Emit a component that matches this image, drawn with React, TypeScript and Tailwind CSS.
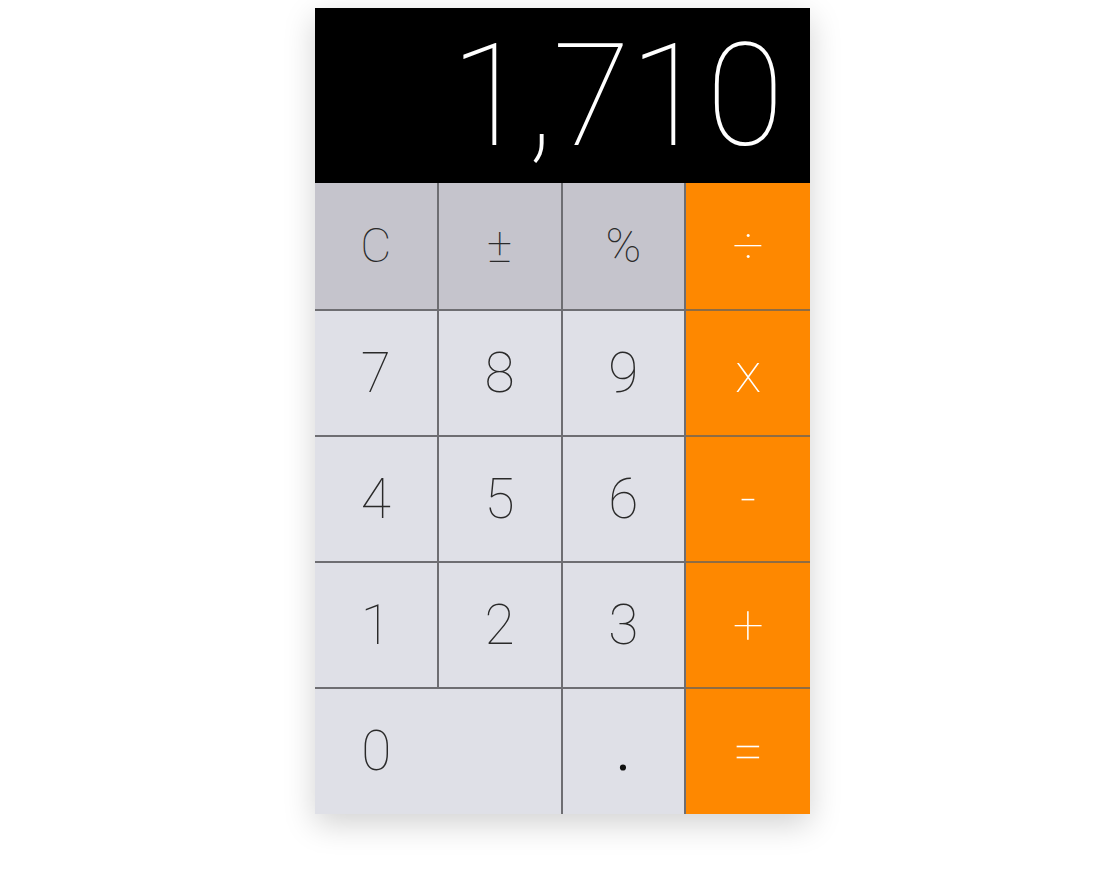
import React from "react";

type Key = { label: string; kind: "fn" | "num" | "op"; wide?: boolean };

const rows: Key[][] = [
  [
    { label: "C", kind: "fn" },
    { label: "±", kind: "fn" },
    { label: "%", kind: "fn" },
    { label: "÷", kind: "op" },
  ],
  [
    { label: "7", kind: "num" },
    { label: "8", kind: "num" },
    { label: "9", kind: "num" },
    { label: "x", kind: "op" },
  ],
  [
    { label: "4", kind: "num" },
    { label: "5", kind: "num" },
    { label: "6", kind: "num" },
    { label: "-", kind: "op" },
  ],
  [
    { label: "1", kind: "num" },
    { label: "2", kind: "num" },
    { label: "3", kind: "num" },
    { label: "+", kind: "op" },
  ],
  [
    { label: "0", kind: "num", wide: true },
    { label: ".", kind: "num" },
    { label: "=", kind: "op" },
  ],
];

const rowHeights = ["h-[128px]", "h-[126px]", "h-[126px]", "h-[126px]", "h-[125px]"];

export default function App() {
  return (
    <div className="min-h-[869px] bg-white pt-2 pl-[315px]" style={{ fontFamily: "Roboto, 'Liberation Sans', sans-serif" }}>
      <div className="w-[495px] shadow-[0_10px_30px_rgba(0,0,0,0.18)]">
        <div className="h-[175px] bg-black flex items-center justify-end pr-[27px] overflow-hidden">
          <span className="text-white text-[142px] leading-none font-thin tracking-[-1px] mt-[2px]">1,710</span>
        </div>
        {rows.map((row, ri) => {
          const last = ri === rows.length - 1;
          return (
            <div key={ri} className={`grid grid-cols-4 ${rowHeights[ri]}`}>
              {row.map((k, ci) => {
                const isLastCol = k.kind === "op";
                const bg =
                  k.kind === "op" ? "bg-[#fe8800] text-white" : k.kind === "fn" ? "bg-[#c5c4cc] text-[#2a2a2a]" : "bg-[#dfe0e7] text-[#2a2a2a]";
                const bb = last ? "" : k.kind === "op" ? "border-b-2 border-b-[#8e6c44]" : "border-b-2 border-b-[#6e6e72]";
                const br = isLastCol ? "" : "border-r-2 border-r-[#6e6e72]";
                const size = k.kind === "fn" ? "text-[48px]" : "text-[55px]";
                return (
                  <div
                    key={ci}
                    className={`${bg} ${bb} ${br} ${k.wide ? "col-span-2" : ""} flex items-center font-thin ${size} leading-none`}
                  >
                    {k.wide ? (
                      <div className="w-1/2 flex justify-center">{k.label}</div>
                    ) : k.label === "." ? (
                      <div className="w-full flex justify-center font-normal text-[#111]">{k.label}</div>
                    ) : (
                      <div className="w-full flex justify-center">{k.label}</div>
                    )}
                  </div>
                );
              })}
            </div>
          );
        })}
      </div>
    </div>
  );
}
